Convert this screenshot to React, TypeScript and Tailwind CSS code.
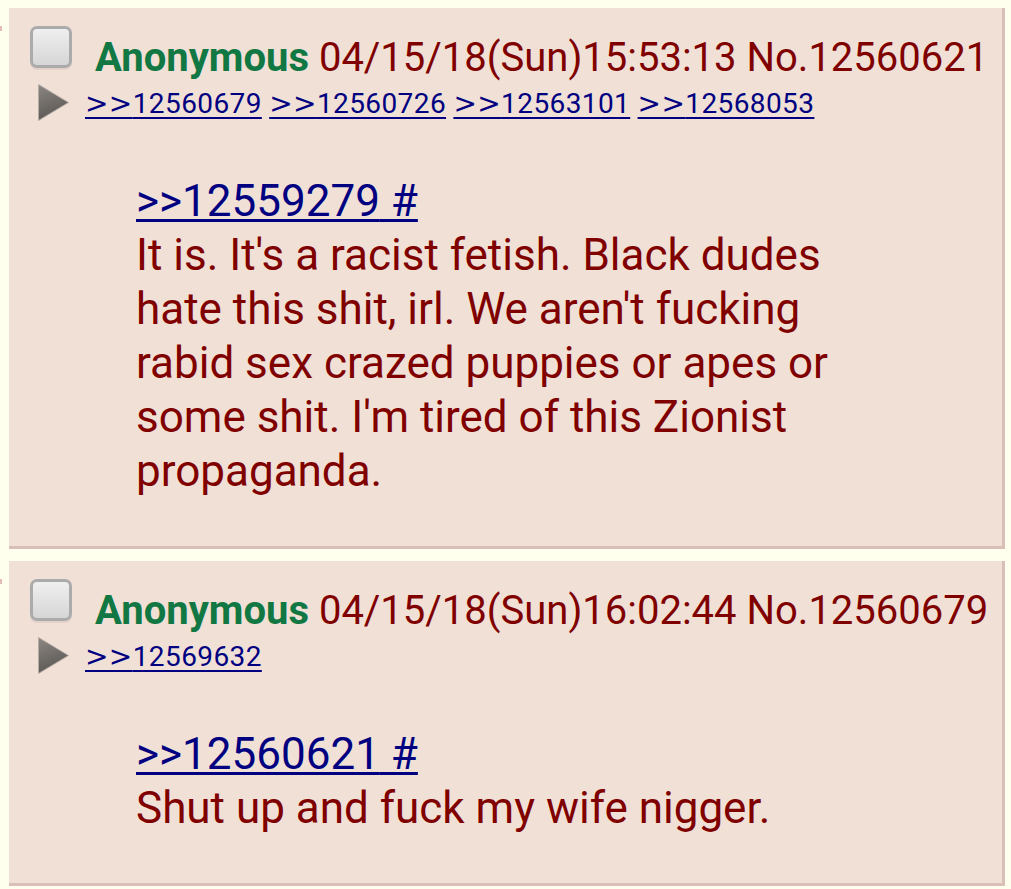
import React from "react";

type PostData = {
  no: string;
  date: string;
  backlinks: string[];
  quote: string;
  body: string;
};

const posts: PostData[] = [
  {
    no: "12560621",
    date: "04/15/18(Sun)15:53:13",
    backlinks: ["12560679", "12560726", "12563101", "12568053"],
    quote: "12559279",
    body: "It is. It's a racist fetish. Black dudes hate this shit, irl. We aren't fucking rabid sex crazed puppies or apes or some shit. I'm tired of this Zionist propaganda.",
  },
  {
    no: "12560679",
    date: "04/15/18(Sun)16:02:44",
    backlinks: ["12569632"],
    quote: "12560621",
    body: "Shut up and fuck my wife nigger.",
  },
];

function Triangle() {
  return (
    <svg width="31" height="37" viewBox="0 0 31 37" className="block shrink-0">
      <defs>
        <linearGradient id="tg" x1="0" y1="0" x2="0.3" y2="1">
          <stop offset="0" stopColor="#8c8782" />
          <stop offset="1" stopColor="#5c5855" />
        </linearGradient>
      </defs>
      <polygon points="0.5,0.5 30.5,18.5 0.5,36.5" fill="url(#tg)" stroke="#b7aca6" strokeWidth="1" />
    </svg>
  );
}

function Post({ p }: { p: PostData }) {
  return (
    <div className="flex">
      <div className="w-[9px] shrink-0">
        <div className="mt-[18px] w-[2px] h-[5px] bg-[#e2bdb4]" />
      </div>
      <div className="w-[996px] bg-[#F0E0D6] border-r-[3px] border-b-[3px] border-[#D9BFB7] pt-[18px] pb-[48px]">
        <div className="flex items-start">
          <div className="ml-[21px] w-[42px] h-[42px] shrink-0 rounded-[7px] border-[3px] border-[#ababab] bg-linear-to-b from-[#efefef] to-[#d6d6d6] shadow-[0_2px_0_#e4d2c9]" />
          <div className="ml-[23px] mt-[8px] leading-[48px] text-[40px] font-['Roboto'] whitespace-nowrap">
            <span className="font-bold text-[#117743]">Anonymous</span>{" "}
            <span className="text-[#800000]">
              {p.date} No.{p.no}
            </span>
          </div>
        </div>
        <div className="flex items-start mt-[6px]">
          <div className="ml-[29px] mt-[-4px]">
            <Triangle />
          </div>
          <div className="ml-[16px] text-[28px] leading-[32px] font-['Roboto'] tracking-[0.4px] text-[#000080] whitespace-nowrap">
            {p.backlinks.map((b, i) => (
              <React.Fragment key={b}>
                {i > 0 ? " " : null}
                <a className="underline decoration-[2px] underline-offset-[4px]">
                  <span className="font-['DejaVu_Sans']">&gt;&gt;</span>
                  {b}
                </a>
              </React.Fragment>
            ))}
          </div>
        </div>
        <div className="ml-[127px] mt-[53px] w-[740px] text-[44px] leading-[54px] font-['Roboto']">
          <a className="text-[#000080] underline decoration-[3px] underline-offset-[3px]">&gt;&gt;{p.quote} #</a>
          <div className="text-[#800000]">{p.body}</div>
        </div>
      </div>
    </div>
  );
}

export default function App() {
  return (
    <div className="min-h-[889px] bg-[#FFFFEE] pt-[8px] flex flex-col gap-[12px]">
      {posts.map((p) => (
        <Post key={p.no} p={p} />
      ))}
    </div>
  );
}
